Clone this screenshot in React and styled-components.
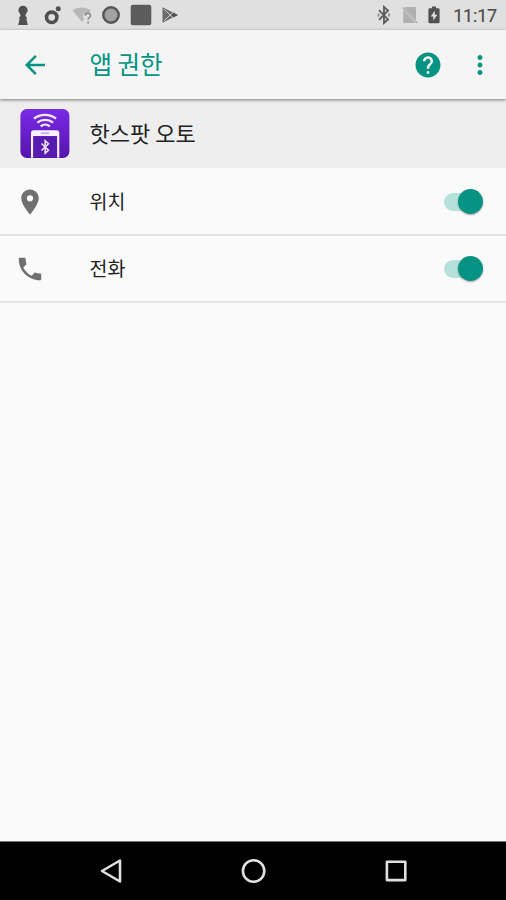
import React from "react";
import styled, { createGlobalStyle } from "styled-components";
import { MdArrowBack, MdHelp, MdLocationOn, MdMoreVert, MdPhone } from "react-icons/md";

const permissions = [
    { id: "location", name: "위치", icon: MdLocationOn, enabled: true },
    { id: "phone", name: "전화", icon: MdPhone, enabled: true },
];

function StatusBar() {
    return (
        <StatusContainer>
            <div className="notifications">
                <svg width="12" height="22" viewBox="0 0 12 22">
                    <circle cx="6" cy="6.3" r="4.6" />
                    <path d="M3.4 9h5.2v3.2l1.4 1.3-.6 1.5 1.4 6H1.2l1.4-6-.6-1.500 1.400-1.300z" />
                </svg>
                <svg width="18" height="20" viewBox="0 0 18 20">
                    <circle cx="7.7" cy="12.3" r="5.2" fill="none" stroke="#505050" strokeWidth="3.6" />
                    <circle cx="14.2" cy="3.7" r="2.5" />
                </svg>
                <svg width="22" height="20" viewBox="0 0 22 20">
                    <path d="M1.5 5.6C6 1.4 15 1.4 19.8 5.6L17.2 9c-3-1.4-5.2 0-5.2 3.2l1.3 2.2-2.4 2.4z" fill="#b8b8b8" />
                    <path d="M14.4 10.8c0-3.6 5.1-3.3 5.1-.3 0 2-2.4 2.1-2.4 4.2M17.1 16.4v2" fill="none" stroke="#858585" strokeWidth="1.5" />
                </svg>
                <svg width="20" height="20" viewBox="0 0 20 20">
                    <circle cx="10" cy="10" r="7.7" fill="#a2a2a2" stroke="#565656" strokeWidth="2.5" />
                </svg>
                <svg width="22" height="22" viewBox="0 0 22 22">
                    <rect x=".7" y=".7" width="20.6" height="20.6" rx="2.2" fill="#5c5c5c" />
                </svg>
                <svg width="18" height="18" viewBox="0 0 18 18">
                    <path d="M1.500 1.300 17 9 1.500 16.700z" fill="#6a6a6a" />
                    <path d="M3 3.200 13.500 13M3 14.800 13.500 5" fill="none" stroke="#cdcdcd" strokeWidth="1" />
                    <path d="M10.300 9 12.800 6.800 16.500 9l-3.700 2.200z" />
                </svg>
            </div>
            <div className="system">
                <svg width="14" height="20" viewBox="0 0 14 20">
                    <path d="m2 5.200 9 9.200L7 18V2l4 3.600L2 14.800" fill="none" stroke="#5e5e5e" strokeWidth="1.900" />
                    <path d="M1.600 8.600v2.800M12 8.600v2.800" stroke="#888" strokeWidth="1.800" />
                </svg>
                <svg width="18" height="18" viewBox="0 0 18 18">
                    <path d="M4.500 1H15v13.200L3.600 2.200zM2.200 4 14.500 17H2.200z" fill="#b0b0b0" />
                    <path d="m1.500 1.500 14.700 15.500" stroke="#aaa" strokeWidth="1.100" />
                </svg>
                <svg width="12" height="18" viewBox="0 0 12 18">
                    <path d="M4 .5h4v1.800h2.200q1.400 0 1.400 1.200v12.500q0 1.300-1.400 1.300H1.800q-1.400 0-1.400-1.300V3.500q0-1.200 1.400-1.200H4z" />
                    <path d="M6.800 4.800 2.700 10.500h2.600v4L9.400 8.800H6.800z" fill="#e0e0e0" />
                </svg>
                <span>11:17</span>
            </div>
        </StatusContainer>
    );
}

function HotspotIcon() {
    return (
        <svg width="50" height="50" viewBox="0 0 50 50">
            <defs>
                <linearGradient id="hotspot" x1="0" y1="0" x2="0" y2="1">
                    <stop offset="0" stopColor="#7a2be8" />
                    <stop offset="1" stopColor="#5414ab" />
                </linearGradient>
            </defs>
            <rect x=".4" y="0" width="49" height="49" rx="6.5" fill="url(#hotspot)" />
            <g fill="none" stroke="#f2e9ff" strokeWidth="2.4">
                <path d="M14 9.7c6-5.1 16-5.1 22 0" />
                <path d="M17.400 13.600c4.400-3.700 11.300-3.700 15.700 0" />
                <path d="M20.700 17.300c2.600-2.300 6.500-2.300 9.100 0" />
            </g>
            <path d="M11 48.800V24q0-2.800 2.800-2.800h22.700q2.800 0 2.800 2.800v24.800h-2.200V27h-24v21.800z" fill="#f5efff" />
            <path d="M14 27.800h22.200v20.700H14z" fill="#571bb0" />
            <path d="M21 24.200h8" stroke="#b99ae6" strokeWidth="1.4" />
            <path d="m21.500 34.500 7 6.800-3.300 2.900V31.800l3.300 2.900-7 6.800" fill="none" stroke="#eadfff" strokeWidth="1.6" />
        </svg>
    );
}

function PermissionRow({ permission }) {
    const Icon = permission.icon;
    return (
        <Row>
            <div className="icon">
                <Icon size={30} />
            </div>
            <span className="name">{permission.name}</span>
            <Switch $on={permission.enabled} role="switch" aria-checked={permission.enabled} />
        </Row>
    );
}

export default function App() {
    return (
        <Container>
            <GlobalStyle />
            <StatusBar />
            <AppBar>
                <MdArrowBack className="back" size={30} />
                <h1>앱 권한</h1>
                <MdHelp size={30} />
                <MdMoreVert className="more" size={30} />
            </AppBar>
            <AppHeader>
                <HotspotIcon />
                <h2>핫스팟 오토</h2>
            </AppHeader>
            <List>
                {permissions.map((permission) => (
                    <PermissionRow key={permission.id} permission={permission} />
                ))}
            </List>
            <NavBar>
                <svg width="24" height="28" viewBox="0 0 24 28">
                    <path d="M21 3.5v21L3 14z" />
                </svg>
                <svg width="28" height="28" viewBox="0 0 28 28">
                    <circle cx="13.6" cy="14" r="10.7" />
                </svg>
                <svg width="24" height="24" viewBox="0 0 24 24">
                    <rect x="2.9" y="2.7" width="18.4" height="18.4" />
                </svg>
            </NavBar>
        </Container>
    );
}

const GlobalStyle = createGlobalStyle`
    * {
        box-sizing: border-box;
    }
    body {
        margin: 0;
        font-family: "Noto Sans CJK KR", sans-serif;
    }
    h1, h2 {
        margin: 0;
        font-weight: 400;
    }
    svg {
        display: block;
        flex-shrink: 0;
    }
`;

const Container = styled.div`
    display: flex;
    flex-direction: column;
    width: 506px;
    height: 900px;
    overflow: hidden;
    background: #fafafa;
`;

const StatusContainer = styled.div`
    display: flex;
    align-items: center;
    justify-content: space-between;
    flex-shrink: 0;
    height: 30px;
    padding: 0 9px 0 16.5px;
    background: #e0e0e0;
    svg {
        fill: #505050;
    }
    .notifications {
        display: flex;
        align-items: center;
        gap: 8.5px;
        svg:nth-child(2) {
            margin-left: 7px;
        }
        svg:nth-child(6) {
            margin-left: 0.5px;
        }
    }
    .system {
        display: flex;
        align-items: center;
        svg:nth-child(2) {
            margin-left: 10px;
        }
        svg:nth-child(3) {
            margin: 0 13px 0 9px;
        }
    }
    span {
        color: #4d4d4d;
        font: 400 18px/30px Roboto, sans-serif;
        height: 30px;
        padding-top: 1px;
        letter-spacing: -0.2px;
        -webkit-text-stroke: 0.2px #4d4d4d;
    }
`;

const AppBar = styled.header`
    display: flex;
    align-items: center;
    flex-shrink: 0;
    height: 69px;
    padding: 0 11px 0 20px;
    background: #f5f5f5;
    color: #079383;
    box-shadow: 0 1px 3px rgba(0, 0, 0, 0.5);
    z-index: 1;
    h1 {
        flex: 1;
        margin-left: 39.5px;
        padding-bottom: 2px;
        font-size: 24.5px;
        line-height: 36px;
    }
    .more {
        margin-left: 22px;
    }
`;

const AppHeader = styled.div`
    display: flex;
    align-items: center;
    flex-shrink: 0;
    height: 69px;
    padding-left: 20px;
    background: #eee;
    h2 {
        margin-left: 19.5px;
        padding-bottom: 4px;
        color: #222;
        font-size: 22px;
        line-height: 32px;
    }
`;

const List = styled.div`
    flex: 1;
    padding-top: 1px;
`;

const Row = styled.div`
    display: flex;
    align-items: center;
    height: 67px;
    padding: 0 23px 0 15px;
    border-bottom: 2px solid #e4e4e4;
    .icon {
        width: 74.5px;
        color: #707070;
    }
    .name {
        flex: 1;
        padding-bottom: 2px;
        color: #222;
        font-size: 19.5px;
        line-height: 28px;
    }
`;

const Switch = styled.div`
    display: flex;
    align-items: center;
    justify-content: ${({ $on }) => ($on ? "flex-end" : "flex-start")};
    width: 39px;
    height: 18px;
    border-radius: 9px;
    background: linear-gradient(to right, #b5e1da 34px, transparent 34px);
    &::after {
        content: "";
        width: 25px;
        height: 25px;
        border-radius: 50%;
        background: #079383;
        box-shadow: 0 1px 2px rgba(0, 0, 0, 0.35);
    }
`;

const NavBar = styled.nav`
    display: flex;
    align-items: center;
    justify-content: space-between;
    flex-shrink: 0;
    height: 59px;
    padding: 0 98px 1px 99px;
    border-top: 1px solid #777;
    background: #000;
    svg {
        fill: none;
        stroke: #e0e0e0;
        stroke-width: 2.6;
        stroke-linejoin: round;
    }
`;
